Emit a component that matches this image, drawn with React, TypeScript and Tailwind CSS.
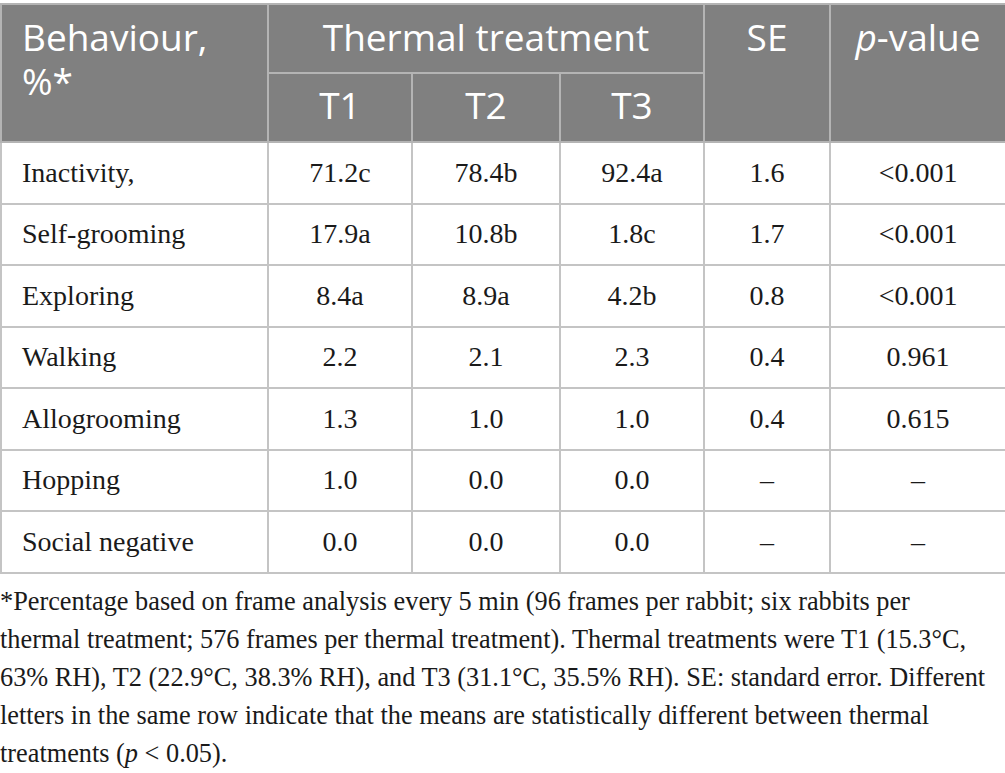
import React from 'react';

const rows: string[][] = [
  ['Inactivity,', '71.2c', '78.4b', '92.4a', '1.6', '<0.001'],
  ['Self-grooming', '17.9a', '10.8b', '1.8c', '1.7', '<0.001'],
  ['Exploring', '8.4a', '8.9a', '4.2b', '0.8', '<0.001'],
  ['Walking', '2.2', '2.1', '2.3', '0.4', '0.961'],
  ['Allogrooming', '1.3', '1.0', '1.0', '0.4', '0.615'],
  ['Hopping', '1.0', '0.0', '0.0', '–', '–'],
  ['Social negative', '0.0', '0.0', '0.0', '–', '–'],
];

const sans = "font-['Open_Sans',sans-serif]";
const serif = "font-['Liberation_Serif',serif]";

export default function App() {
  return (
    <div className="bg-white w-[1005px] h-[773px] pt-[3px] text-[#231f20]">
      <table className="table-fixed border-collapse w-[1005px]">
        <colgroup>
          <col className="w-[267px]" />
          <col className="w-[144px]" />
          <col className="w-[148px]" />
          <col className="w-[144px]" />
          <col className="w-[126px]" />
          <col className="w-[176px]" />
        </colgroup>
        <thead className={`${sans} text-white text-[37px] leading-[44px] bg-[#808080]`}>
          <tr className="h-[69px]">
            <th rowSpan={2} className="border-2 border-[#b4b4b4] align-top text-left font-normal pl-[20px] pt-[10px]">
              Behaviour,
              <br />
              %*
            </th>
            <th colSpan={3} className="border-2 border-[#b4b4b4] font-normal align-top pt-[10px]">
              Thermal treatment
            </th>
            <th rowSpan={2} className="border-2 border-[#b4b4b4] font-normal align-top pt-[10px]">
              SE
            </th>
            <th rowSpan={2} className="border-2 border-[#b4b4b4] font-normal align-top pt-[10px]">
              <i>p</i>-value
            </th>
          </tr>
          <tr className="h-[69px]">
            <th className="border-2 border-[#b4b4b4] font-normal align-top pt-[9px]">T1</th>
            <th className="border-2 border-[#b4b4b4] font-normal align-top pt-[9px]">T2</th>
            <th className="border-2 border-[#b4b4b4] font-normal align-top pt-[9px]">T3</th>
          </tr>
        </thead>
        <tbody className={`${serif} text-[28px] text-[#1a1a1a]`}>
          {rows.map((r) => (
            <tr key={r[0]} className="h-[61.5px]">
              {r.map((c, i) => (
                <td
                  key={i}
                  className={`border-2 border-[#c4c4c4] ${i === 0 ? 'text-left pl-[20px]' : 'text-center'}`}
                >
                  {c}
                </td>
              ))}
            </tr>
          ))}
        </tbody>
      </table>
      <p className={`${serif} text-[26.3px] leading-[38px] text-[#1a1a1a] mt-[9px] whitespace-nowrap`}>
        *Percentage based on frame analysis every 5 min (96 frames per rabbit; six rabbits per
        <br />
        thermal treatment; 576 frames per thermal treatment). Thermal treatments were T1 (15.3°C,
        <br />
        63% RH), T2 (22.9°C, 38.3% RH), and T3 (31.1°C, 35.5% RH). SE: standard error. Different
        <br />
        letters in the same row indicate that the means are statistically different between thermal
        <br />
        treatments (<i>p</i> &lt; 0.05).
      </p>
    </div>
  );
}
